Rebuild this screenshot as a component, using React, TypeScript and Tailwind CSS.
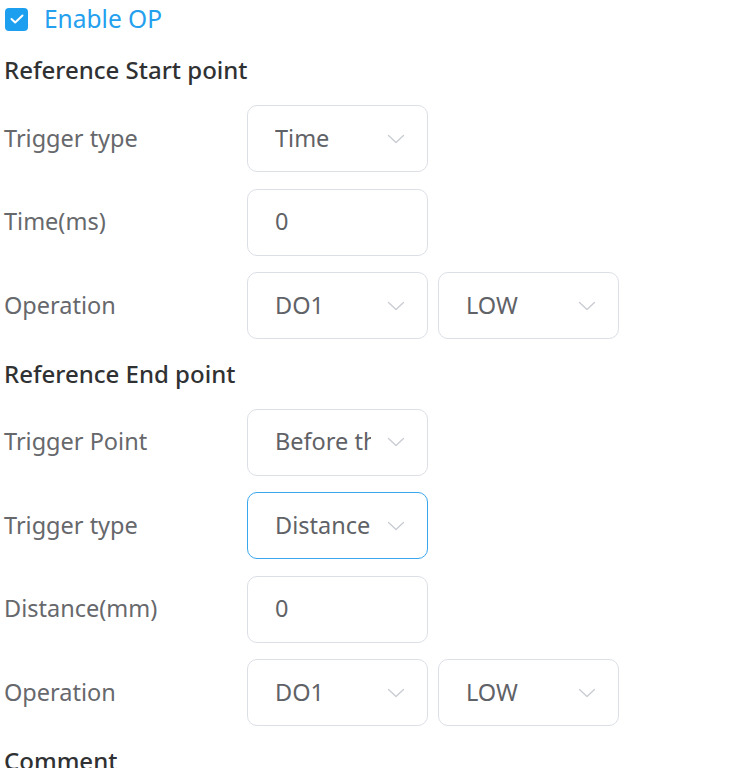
import React from "react";

const Chevron = () => (
  <svg width="18" height="10" viewBox="0 0 18 10" fill="none" className="shrink-0">
    <path d="M1.5 1.5 L9 8.5 L16.5 1.5" stroke="#c8cbd2" strokeWidth="1.3" strokeLinecap="round" strokeLinejoin="round" />
  </svg>
);

function Select({ value, focused = false }: { value: string; focused?: boolean }) {
  return (
    <div
      className={`flex h-[67px] w-[181px] items-center justify-between rounded-[10px] bg-white pl-[27px] pr-[22px] ${
        focused ? "border-[1.5px] border-[#3aa6ec]" : "border border-[#dcdfe6]"
      }`}
    >
      <span className="w-[96px] overflow-hidden whitespace-nowrap text-[23.5px] text-[#5f6266]">{value}</span>
      <Chevron />
    </div>
  );
}

function Input({ value }: { value: string }) {
  return (
    <div className="flex h-[67px] w-[181px] items-center rounded-[10px] border border-[#dcdfe6] bg-white pl-[27px]">
      <span className="text-[23.5px] text-[#5f6266]">{value}</span>
    </div>
  );
}

function Row({ label, children }: { label: string; children: React.ReactNode }) {
  return (
    <div className="mb-[16.5px] flex h-[67px] items-center">
      <div className="w-[247px] pl-[4px] text-[23.5px] text-[#66686c]">{label}</div>
      <div className="flex gap-[10px]">{children}</div>
    </div>
  );
}

function Heading({ children }: { children: React.ReactNode }) {
  return (
    <div className="mb-[17px] flex h-[36px] items-center pl-[4px] text-[24px] font-medium text-[#303133]">
      {children}
    </div>
  );
}

export default function App() {
  return (
    <div
      className="h-[768px] w-[735px] overflow-hidden bg-white"
      style={{ fontFamily: '"Noto Sans", sans-serif' }}
    >
      <div className="mb-[14px] flex h-[38px] items-center gap-[16px] pl-[5px]">
        <div className="flex h-[23px] w-[23px] items-center justify-center rounded-[4px] bg-[#1d9ff0]">
          <svg width="14" height="10" viewBox="0 0 14 10" fill="none">
            <path d="M1.5 5 L5.2 8.5 L12.5 1.5" stroke="white" strokeWidth="2" strokeLinecap="round" strokeLinejoin="round" />
          </svg>
        </div>
        <span className="text-[24.5px] text-[#24a0ee]">Enable OP</span>
      </div>
      <Heading>Reference Start point</Heading>
      <Row label="Trigger type">
        <Select value="Time" />
      </Row>
      <Row label="Time(ms)">
        <Input value="0" />
      </Row>
      <Row label="Operation">
        <Select value="DO1" />
        <Select value="LOW" />
      </Row>
      <Heading>Reference End point</Heading>
      <Row label="Trigger Point">
        <Select value="Before the end point" />
      </Row>
      <Row label="Trigger type">
        <Select value="Distance" focused />
      </Row>
      <Row label="Distance(mm)">
        <Input value="0" />
      </Row>
      <Row label="Operation">
        <Select value="DO1" />
        <Select value="LOW" />
      </Row>
      <div className="mt-[2px]">
        <Heading>Comment</Heading>
      </div>
    </div>
  );
}
